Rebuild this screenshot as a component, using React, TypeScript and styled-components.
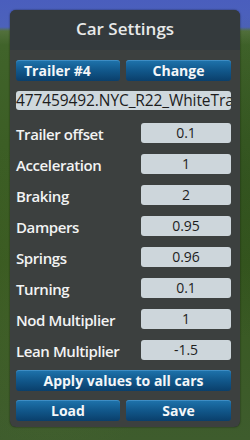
import React from "react";
import styled, { createGlobalStyle } from "styled-components";

const GlobalStyle = createGlobalStyle`
  html, body {
    margin: 0;
    padding: 0;
  }
  body {
    font-family: "Open Sans", "Noto Sans", sans-serif;
  }
`;

const Scene = styled.div`
  width: 250px;
  height: 440px;
  box-sizing: border-box;
  padding: 10px 10px 0 10px;
  overflow: hidden;
  background:
    radial-gradient(ellipse at 20% 70%, rgba(80, 110, 50, 0.35), transparent 40%),
    radial-gradient(ellipse at 85% 40%, rgba(30, 60, 20, 0.35), transparent 45%),
    linear-gradient(
      to bottom,
      #4a5ebd 0px,
      #4c62bb 27px,
      #52703c 31px,
      #40632a 45px,
      #37581f 60%,
      #3e5c2d 100%
    );
`;

const Panel = styled.div`
  width: 230px;
  height: 417px;
  border-radius: 6px;
  overflow: hidden;
  background: #3c403f;
  box-shadow: 0 0 2px rgba(0, 0, 0, 0.6);
  display: flex;
  flex-direction: column;
`;

const Header = styled.div`
  height: 40px;
  background: #343a3d;
  display: flex;
  align-items: center;
  justify-content: center;
  color: #e8e9e9;
  font-size: 17px;
  font-weight: 600;
  padding-bottom: 3px;
  box-sizing: border-box;
`;

const Body = styled.div`
  padding: 10px 9px 0 6px;
  display: flex;
  flex-direction: column;
`;

const ButtonRow = styled.div`
  display: grid;
  grid-template-columns: 104px 105px;
  gap: 6px;
`;

const BlueButton = styled.div<{ $align?: "left" | "center" }>`
  height: 21px;
  border-radius: 3px;
  background: linear-gradient(to bottom, #1f74ad 0%, #125a8e 45%, #0a3f6b 100%);
  box-shadow: inset 0 1px 0 rgba(120, 190, 240, 0.35);
  color: #f4f6f8;
  font-size: 14px;
  font-weight: 700;
  line-height: 21px;
  text-align: ${(p) => (p.$align === "left" ? "left" : "center")};
  padding: ${(p) => (p.$align === "left" ? "0 8px" : "0")};
  white-space: nowrap;
  box-sizing: border-box;
`;

const NameField = styled.div`
  margin-top: 10px;
  height: 19px;
  border-radius: 3px;
  background: #cfd8dd;
  color: #1d1d1d;
  font-size: 15.5px;
  line-height: 19px;
  white-space: nowrap;
  overflow: hidden;
  letter-spacing: -0.1px;
`;

const Settings = styled.div`
  margin-top: 11px;
  display: flex;
  flex-direction: column;
  gap: 11px;
`;

const Row = styled.div`
  display: grid;
  grid-template-columns: 125px 90px;
  align-items: center;
  height: 20px;
`;

const Label = styled.div`
  color: #f2f3f3;
  font-size: 15px;
  font-weight: 600;
  letter-spacing: -0.4px;
  white-space: nowrap;
  padding-top: 3px;
`;

const Value = styled.div`
  height: 20px;
  border-radius: 3px;
  background: #cdd6db;
  color: #1e1e1e;
  font-size: 14px;
  line-height: 20px;
  text-align: center;
`;

const WideButton = styled(BlueButton)`
  margin-top: 12px;
`;

const BottomRow = styled(ButtonRow)`
  margin-top: 9px;
`;

const settings: [string, string][] = [
  ["Trailer offset", "0.1"],
  ["Acceleration", "1"],
  ["Braking", "2"],
  ["Dampers", "0.95"],
  ["Springs", "0.96"],
  ["Turning", "0.1"],
  ["Nod Multiplier", "1"],
  ["Lean Multiplier", "-1.5"],
];

export default function App() {
  return (
    <Scene>
      <GlobalStyle />
      <Panel>
        <Header>Car Settings</Header>
        <Body>
          <ButtonRow>
            <BlueButton $align="left">Trailer #4</BlueButton>
            <BlueButton>Change</BlueButton>
          </ButtonRow>
          <NameField>477459492.NYC_R22_WhiteTra</NameField>
          <Settings>
            {settings.map(([label, value]) => (
              <Row key={label}>
                <Label>{label}</Label>
                <Value>{value}</Value>
              </Row>
            ))}
          </Settings>
          <WideButton>Apply values to all cars</WideButton>
          <BottomRow>
            <BlueButton>Load</BlueButton>
            <BlueButton>Save</BlueButton>
          </BottomRow>
        </Body>
      </Panel>
    </Scene>
  );
}
